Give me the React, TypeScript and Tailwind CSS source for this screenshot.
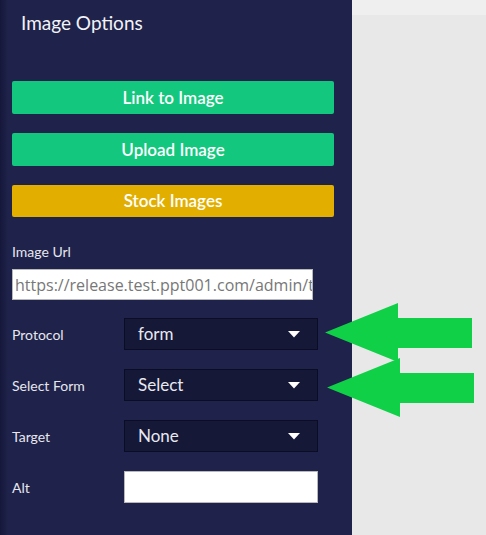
import React from "react";

const font = { fontFamily: "Lato, 'Open Sans', sans-serif" };

const Caret = () => (
	<svg width="12" height="7" viewBox="0 0 12 7" className="shrink-0">
		<path d="M0 0 L12 0 L6 6.5 Z" fill="#ffffff" />
	</svg>
);

const SelectBox = ({ value }: { value: string }) => (
	<div className="flex h-[32px] w-[194px] items-center justify-between border border-[#0b0d24] bg-[#151837] pl-[13px] pr-[17px] text-[17px] text-[#e8e9f0]">
		<span>{value}</span>
		<Caret />
	</div>
);

const Row = ({ label, children }: { label: string; children: React.ReactNode }) => (
	<div className="flex h-[32px] items-center">
		<span className="w-[112px] text-[14px] text-[#e6e7ee]">{label}</span>
		{children}
	</div>
);

const Arrow = ({ top, left }: { top: number; left: number }) => (
	<svg
		width="150"
		height="60"
		viewBox="0 0 150 60"
		className="absolute"
		style={{ top, left }}
	>
		<path d="M0 29.5 L73 0 L73 15 L147 15 L147 45 L73 45 L73 59 Z" fill="#10d048" />
	</svg>
);

export default function App() {
	return (
		<div className="relative flex h-[535px] w-[486px] overflow-hidden bg-[#e8e8e8]" style={font}>
			<div className="relative flex h-full w-[352px] shrink-0 flex-col bg-[#1f224a] pl-[12px]">
				<div className="absolute inset-y-0 left-0 w-[8px] bg-gradient-to-r from-[#15173a] to-[#1f224a]" />
				<h1 className="relative mt-[10px] pl-[9px] text-[19px] leading-[26px] text-[#f2f3f7]">
					Image Options
				</h1>
				<div className="relative mt-[45px] flex w-[322px] flex-col gap-[19px]">
					<button className="h-[33px] rounded-[2px] bg-[#13c87e] text-[17px] font-semibold text-white">
						Link to Image
					</button>
					<button className="h-[33px] rounded-[2px] bg-[#13c87e] text-[17px] font-semibold text-white">
						Upload Image
					</button>
					<button className="h-[32px] rounded-[2px] bg-[#e2af00] text-[17px] font-semibold text-white">
						Stock Images
					</button>
				</div>
				<label className="relative mt-[27px] text-[14px] leading-[16px] text-[#e6e7ee]">Image Url</label>
				<div
					className="relative mt-[9px] flex h-[31px] w-[301px] items-center overflow-hidden border border-[#b8b8b8] bg-white pl-[2px] text-[16px] whitespace-nowrap text-[#777]"
					style={{ fontFamily: "'Open Sans', sans-serif" }}
				>
					https://release.test.ppt001.com/admin/t
				</div>
				<div className="relative mt-[18px] flex flex-col gap-[19px]">
					<Row label="Protocol">
						<SelectBox value="form" />
					</Row>
					<Row label="Select Form">
						<SelectBox value="Select" />
					</Row>
					<Row label="Target">
						<SelectBox value="None" />
					</Row>
					<Row label="Alt">
						<div className="h-[32px] w-[194px] border border-[#b8b8b8] bg-white" />
					</Row>
				</div>
			</div>
			<div className="flex flex-1 flex-col">
				<div className="h-[15px] bg-[#efefef]" />
			</div>
			<Arrow top={303} left={325} />
			<Arrow top={358} left={327} />
		</div>
	);
}
